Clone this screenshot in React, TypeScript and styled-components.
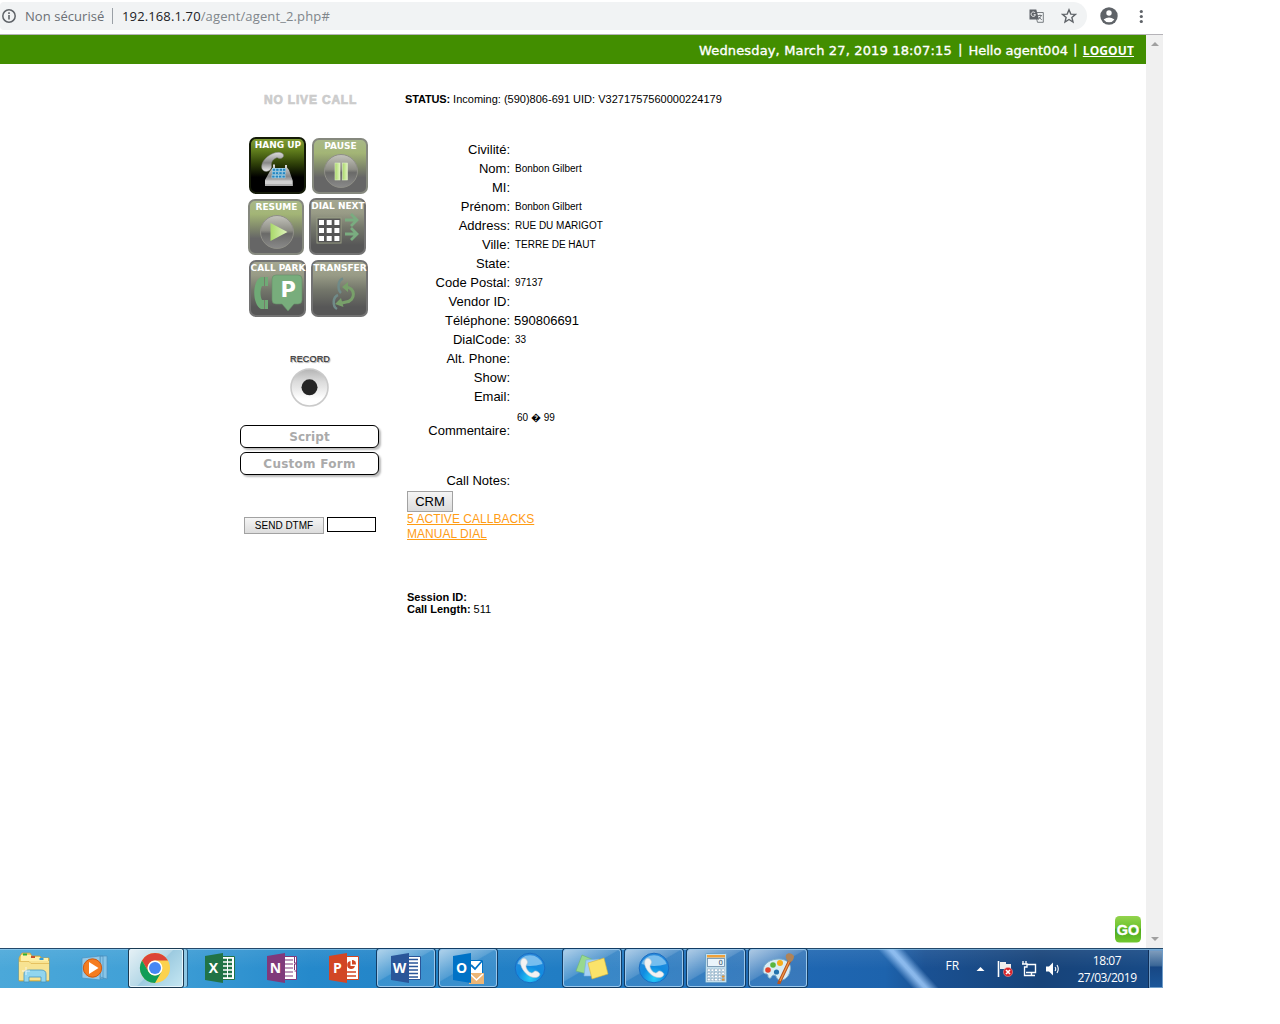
import React from 'react';
import styled, { createGlobalStyle, css } from 'styled-components';

const GlobalStyle = createGlobalStyle`
  * { box-sizing: border-box; }
  body { margin: 0; background: #fff; font-family: 'Liberation Sans', Arial, sans-serif; color: #000; }
  button { font-family: inherit; }
`;

const Desktop = styled.div`
  width: 1163px;
  height: 988px;
  display: flex;
  flex-direction: column;
  overflow: hidden;
`;

/* ---------- browser toolbar ---------- */

const Toolbar = styled.header`
  height: 35px;
  flex: none;
  display: flex;
  align-items: center;
  padding: 0 15px 3px 0;
  border-bottom: 1px solid #b5b3b8;
  font-family: 'Open Sans', 'Noto Sans', sans-serif;
  font-size: 13px;
`;

const AddressBar = styled.div`
  width: 1087px;
  height: 28px;
  margin-top: 1px;
  padding: 0 10px 0 2px;
  display: flex;
  align-items: center;
  background: #f1f3f4;
  border-radius: 4px 14px 14px 4px;
  color: #80868b;
`;

const Security = styled.span`
  margin-left: 9px;
  width: 88px;
  line-height: 16px;
  border-right: 1px solid #9aa0a6;
  color: #6b6f74;
  white-space: nowrap;
  letter-spacing: 0.05px;
`;

const Url = styled.span`
  margin-left: 9px;
  flex: 1;
  white-space: nowrap;
  letter-spacing: 0.13px;
  b { font-weight: 400; color: #202124; }
`;

const ToolIcon = styled.svg<{ $gap?: number }>`
  flex: none;
  margin-left: ${(p) => p.$gap ?? 0}px;
`;

/* ---------- page ---------- */

const Viewport = styled.div`
  flex: 1;
  min-height: 0;
  display: flex;
`;

const Page = styled.main`
  width: 1146px;
  display: flex;
  flex-direction: column;
`;

const Scrollbar = styled.div`
  width: 17px;
  background: #f0f0f0;
  display: flex;
  flex-direction: column;
  justify-content: space-between;
  align-items: center;
  padding: 7px 0 7px;
`;

const Arrow = styled.i<{ $down?: boolean }>`
  border: 4px solid transparent;
  border-top-width: ${(p) => (p.$down ? 4 : 0)}px;
  border-bottom-width: ${(p) => (p.$down ? 0 : 4)}px;
  border-${(p) => (p.$down ? 'top' : 'bottom')}-color: #a0a0a0;
`;

const TopBar = styled.div`
  height: 29px;
  flex: none;
  display: flex;
  justify-content: flex-end;
  align-items: center;
  padding: 1px 12px 0 0;
  background: #428e00;
  color: #fff;
  font: 13px 'DejaVu Sans', Verdana, sans-serif;
  -webkit-text-stroke: 0.35px #fff;
  white-space: pre;
`;

const Clock = styled.span`
  letter-spacing: 0.15px;
`;

const Separator = styled.span<{ $pad: number }>`
  font-size: 12px;
  padding: 0 ${(p) => p.$pad}px;
`;

const Logout = styled.a`
  font: 700 12px 'Open Sans', sans-serif;
  letter-spacing: 0.1px;
  -webkit-text-stroke: 0;
  text-decoration: underline;
`;

const Workspace = styled.div`
  flex: 1;
  display: flex;
`;

const Controls = styled.section`
  width: 405px;
  padding-left: 240px;
  display: flex;
  flex-direction: column;
`;

const CallState = styled.div`
  margin: 29px 0 0 24px;
  height: 14px;
  line-height: 14px;
  font-size: 12px;
  font-weight: 700;
  color: #ccc;
  letter-spacing: 0.82px;
  -webkit-text-stroke: 0.7px #ccc;
  white-space: nowrap;
`;

const TileRow = styled.div<{ $top: number; $left: number; $gap: number }>`
  display: flex;
  align-items: flex-end;
  margin: ${(p) => p.$top}px 0 0 ${(p) => p.$left}px;
  gap: ${(p) => p.$gap}px;
`;

type Tone = 'active' | 'olive' | 'muted';
const tones: Record<Tone, ReturnType<typeof css>> = {
  active: css`
    background: linear-gradient(#7f9b33 0, #5f7c1c 22%, #2c3d08 48%, #000 72%);
    border-color: #141a08;
  `,
  olive: css`
    background: linear-gradient(#a8b888 0, #a3b576 25%, #828b6c 50%, #666 72%);
    border-color: #85887e;
  `,
  muted: css`
    background: linear-gradient(#a4a791 0, #989b86 25%, #74776b 52%, #575757 85%);
    border-color: #727272;
  `,
};

const TileButton = styled.button<{ $tone: Tone; $size: number }>`
  width: ${(p) => p.$size}px;
  height: ${(p) => p.$size}px;
  padding: 0;
  border: 2px solid;
  border-radius: 7px;
  display: flex;
  flex-direction: column;
  align-items: center;
  ${(p) => tones[p.$tone]}
`;

const TileLabel = styled.span`
  height: 12px;
  font: 700 9px/13px 'DejaVu Sans', Verdana, sans-serif;
  color: #fff;
  white-space: nowrap;
  margin-right: -1px;
`;

const Recorder = styled.div`
  margin: 36px 0 0 47px;
  width: 46px;
  display: flex;
  flex-direction: column;
  align-items: center;
  font-size: 9px;
  line-height: 13px;
  letter-spacing: 0.15px;
  color: #333;
  -webkit-text-stroke: 0.2px #333;
  text-shadow: 1px 1px 1px #999;
  svg { margin-top: 1px; }
`;

const MenuButton = styled.button<{ $top: number; $spacing: number }>`
  margin: ${(p) => p.$top}px 0 0;
  width: 139px;
  height: 23px;
  padding: 0;
  border: 1px solid #000;
  border-radius: 6px;
  background: #fff;
  box-shadow: 2px 2px 2px #bbb;
  color: #aaa;
  font: 700 12px/20px 'DejaVu Sans', Verdana, sans-serif;
  letter-spacing: ${(p) => p.$spacing}px;
`;

const Dtmf = styled.div`
  display: flex;
  margin: 42px 0 0 4px;
  gap: 3px;
`;

const NativeButton = styled.button<{ $w: number; $h: number; $size: number }>`
  width: ${(p) => p.$w}px;
  height: ${(p) => p.$h}px;
  padding: 0;
  border: 1px solid #a2a2a2;
  background: linear-gradient(#f5f5f5, #dcdcdc);
  font-size: ${(p) => p.$size}px;
  color: #000;
`;

const DtmfInput = styled.input`
  width: 49px;
  height: 15px;
  border: 1px solid #000;
  padding: 0;
`;

const Details = styled.section`
  flex: 1;
  display: flex;
  flex-direction: column;
  align-items: flex-start;
`;

const Status = styled.div`
  margin-top: 29px;
  height: 14px;
  font-size: 11px;
  line-height: 13px;
  white-space: pre;
  letter-spacing: 0.005px;
  b { letter-spacing: -0.14px; }
`;

const Fields = styled.dl`
  margin: 33px 0 0;
`;

const Field = styled.div<{ $h?: number; $push?: number }>`
  height: ${(p) => p.$h ?? 19}px;
  padding-top: ${(p) => p.$push ?? 0}px;
  display: flex;
  align-items: center;
`;

const Label = styled.dt`
  width: 105px;
  text-align: right;
  font-size: 13px;
  line-height: 19px;
`;

const Value = styled.dd<{ $large?: boolean }>`
  margin: 0 0 0 ${(p) => (p.$large ? 4 : 5)}px;
  font-size: ${(p) => (p.$large ? 13 : 10)}px;
  line-height: 19px;
`;

const Comment = styled.dd`
  margin: 0 0 25px 7px;
  font-size: 10px;
  line-height: 12px;
`;

const Links = styled.nav`
  margin-left: 2px;
  display: flex;
  flex-direction: column;
  align-items: flex-start;
  font-size: 12px;
  line-height: 15px;
`;

const OrangeLink = styled.a`
  color: #ff9c14;
  text-decoration: underline;
  letter-spacing: 0.03px;
`;

const Session = styled.div`
  margin: 49px 0 0 2px;
  font-size: 11px;
  line-height: 12px;
`;

const PageFooter = styled.div`
  display: flex;
  justify-content: flex-end;
  padding: 0 4px 5px 0;
`;

/* ---------- taskbar ---------- */

const Taskbar = styled.footer`
  height: 40px;
  flex: none;
  display: flex;
  padding-left: 3px;
  color: #fff;
  border-top: 1px solid #24496b;
  box-shadow: inset 0 1px 0 rgba(150, 205, 240, 0.7);
  background:
    linear-gradient(48deg, transparent 37%, rgba(165, 208, 255, 0.8) 48%, rgba(165, 208, 255, 0.8) 51%, transparent 62%) 873px 0 / 72px 40px no-repeat,
    linear-gradient(rgba(255, 255, 255, 0.08), transparent 50%),
    linear-gradient(90deg, #4ba8d9 0, #3f9fd6 160px, #2589cb 310px, #217dc4 560px, #1f67b2 800px, #1d63ad 885px, #1a5193 925px, #174379 1040px, #174a86 1150px);
`;

type SlotState = 'idle' | 'open' | 'current';

const Slot = styled.button<{ $state: SlotState }>`
  width: 58px;
  height: 38px;
  margin: 0 2px;
  padding: 0;
  display: flex;
  align-items: center;
  justify-content: center;
  border: 1px solid transparent;
  background: none;
  ${(p) =>
    p.$state === 'open' &&
    css`
      border-color: #9bc8ec;
      border-radius: 3px;
      box-shadow: 0 0 0 1px #123c64;
      background: linear-gradient(150deg, rgba(255, 255, 255, 0.6), rgba(255, 255, 255, 0.22) 45%, rgba(255, 255, 255, 0.1) 47%, rgba(255, 255, 255, 0.12));
    `}
  ${(p) =>
    p.$state === 'current' &&
    css`
      width: 54px;
      margin-right: 6px;
      padding-right: 2px;
      border-color: #e6f5fc;
      border-radius: 2px;
      box-shadow: 0 0 0 1px #1b3a52, 4px 0 0 0 #90c8e4, 5px 0 0 0 #235c85;
      background: linear-gradient(135deg, #e4f0f5, #b5d8e7 48%, #9dcbe0 50%, #c4e6f2);
    `}
`;

const Tray = styled.div`
  margin-left: auto;
  display: flex;
  align-items: center;
  font-family: 'Open Sans', 'Noto Sans', sans-serif;
  font-size: 12px;
`;

const Lang = styled.span`
  margin: 0 17px 6px 0;
  font-size: 12px;
  letter-spacing: -0.1px;
`;

const DateTime = styled.div`
  width: 84px;
  margin-left: 5px;
  text-align: center;
  line-height: 17px;
  letter-spacing: -0.45px;
`;

const ShowDesktop = styled.div`
  width: 14px;
  height: 38px;
  border: 1px solid #6f9cc8;
  background: linear-gradient(#7d9bbb, #3b6797 40%, #174784 45%, #1b5699);
  box-shadow: -1px 0 0 #102f58;
`;

/* ---------- drawings ---------- */

const PhoneSet = () => (
  <svg width="36" height="38" viewBox="0 0 36 38">
    <defs>
      <linearGradient id="metal" x1="0" y1="0" x2="0" y2="1">
        <stop offset="0" stopColor="#ddd" /><stop offset=".55" stopColor="#888" /><stop offset="1" stopColor="#eee" />
      </linearGradient>
    </defs>
    <path d="M4 20C0 18 1 11 7 6C13 1 20 0 23 3C24.500 5 23 7.500 20 7.500C18 7.500 18 6 16 7C12 9 11 12 11.500 15C12 18.500 8 21.500 4 20Z" fill="url(#metal)" stroke="#777" strokeWidth=".5" />
    <path d="M10 20L13 16.500V13.500H15V17H25V14H27V16.500L29 19L32.500 29V35H5V29Z" fill="url(#metal)" />
    <path d="M5 29.500H32.500V35H5Z" fill="#cfcfcf" />
    <path d="M5 34H32.500" stroke="#8d8d8d" />
    <g fill="#2485c0" stroke="#a8ddf5" strokeWidth=".5">
      {[0, 1, 2].map((r) => [0, 1, 2, 3].map((c) => <rect key={`${r}${c}`} x={12.5 + c * 3.4 - r * 0.3} y={17.5 + r * 3.4} width="3" height="2.600" />))}
    </g>
  </svg>
);

const Ball = ({ children }: { children: React.ReactNode }) => (
  <svg width="38" height="38" viewBox="-1 0 38 38">
    <defs>
      <linearGradient id="ball" x1="0" y1="0" x2="0" y2="1">
        <stop offset="0" stopColor="#c4c4bc" /><stop offset=".45" stopColor="#8e8e86" /><stop offset=".55" stopColor="#6a6a68" /><stop offset="1" stopColor="#8a8a8a" />
      </linearGradient>
      <linearGradient id="lime" x1="0" y1="0" x2="1" y2="0">
        <stop offset="0" stopColor="#a9d86a" /><stop offset="1" stopColor="#e0f4bd" />
      </linearGradient>
    </defs>
    <circle cx="19" cy="19" r="16.500" fill="url(#ball)" stroke="#8f8f87" strokeWidth="1" />
    {children}
  </svg>
);

const PauseBall = () => (
  <Ball>
    <rect x="13" y="11" width="5" height="17" fill="url(#lime)" stroke="#dff0c4" strokeWidth=".6" />
    <rect x="20.500" y="11" width="5" height="17" fill="url(#lime)" stroke="#dff0c4" strokeWidth=".6" />
  </Ball>
);

const PlayBall = () => (
  <Ball><path d="M12.500 10L29.500 19L12.500 28Z" fill="url(#lime)" /></Ball>
);

const DialPad = () => (
  <svg width="53" height="40" viewBox="0 0 53 40">
    <rect x="6" y="6" width="24" height="25" fill="#555" stroke="#989d84" />
    {[0, 1, 2].map((r) => [0, 1, 2].map((c) => <rect key={`${r}${c}`} x={8 + c * 7.7} y={8 + r * 8} width="5" height="5" fill="#fff" />))}
    <g fill="none" stroke="#7aac80" strokeWidth="2.800">
      <path d="M34 8H46M40 2L46 8L40 14" />
      <path d="M34 22H46M40 16L46 22L40 28" />
    </g>
  </svg>
);

const ParkSign = () => (
  <svg width="53" height="40" viewBox="0 0 53 40">
    <path d="M17 3H10C1 7 1 30 10 35H17V26H11C9 22 9 16 11 12H17Z" fill="#6faa76" />
    <path d="M13.500 3V12M13.500 26V35" stroke="#777b6b" />
    <path d="M25 1H47Q51 1 51 5V26Q51 30 47 30H43L37 37L31 30H25Q21 30 21 26V5Q21 1 25 1Z" fill="#78ad7c" stroke="#648d68" strokeWidth=".6" />
    <text x="29.500" y="23" fill="#fff" fontSize="21" fontWeight="700" fontFamily="DejaVu Sans, sans-serif">P</text>
  </svg>
);

const TransferArrows = () => (
  <svg width="53" height="40" viewBox="0 0 53 40" fill="none">
    <path d="M30 4.500C25 6 24 15 28 19M25 21C20 23 19 32 24 35" stroke="#708b89" strokeWidth="2.500" />
    <path d="M32 13C43 13 43 27 33 28C30 29 29 29 27 29" stroke="#78a06a" strokeWidth="3" />
    <path d="M29 13L35 8V18ZM22 30L28 24L30.500 33Z" fill="#78a06a" />
  </svg>
);

const RecordDisc = () => (
  <svg width="40" height="40" viewBox="0 0 40 40">
    <defs>
      <linearGradient id="disc" x1="0" y1="0" x2="0" y2="1">
        <stop offset="0" stopColor="#b4b4b4" /><stop offset=".35" stopColor="#dcdcdc" /><stop offset=".5" stopColor="#e6e6e6" /><stop offset=".8" stopColor="#fff" />
      </linearGradient>
    </defs>
    <circle cx="19.500" cy="20.500" r="18.500" fill="url(#disc)" stroke="#cacaca" strokeWidth="1.600" />
    <circle cx="19.500" cy="20.300" r="8" fill="#252525" />
  </svg>
);

const GoBadge = () => (
  <svg width="28" height="28" viewBox="0 0 28 28">
    <defs>
      <linearGradient id="go" x1="0" y1="0" x2="0" y2="1">
        <stop offset="0" stopColor="#93d34d" /><stop offset=".45" stopColor="#6cc32d" /><stop offset=".5" stopColor="#4ba51c" /><stop offset="1" stopColor="#72c92f" />
      </linearGradient>
    </defs>
    <rect x="1" y="1" width="26" height="26.500" rx="4.500" fill="url(#go)" />
    <text x="2.700" y="19.500" fill="#fff" stroke="#fff" strokeWidth=".4" fontSize="14" fontWeight="700" textLength="22.500" lengthAdjust="spacingAndGlyphs" fontFamily="Liberation Sans, sans-serif">GO</text>
  </svg>
);

const Explorer = () => (
  <svg width="36" height="32" viewBox="0 0 36 32">
    <path d="M4 4L6 1H14L16 4H24L25 6H33V29H3V6Z" fill="#edcf68" stroke="#c99f38" strokeWidth=".7" />
    <path d="M5 3H15V9H5Z" fill="#fff0a8" /><path d="M7 1.500h4v2H7Z" fill="#2eb135" />
    <path d="M14 5H24V10H14Z" fill="#fff0a8" /><path d="M15 4h4v2H15Z" fill="#c8502c" />
    <path d="M22 6H32V11H22Z" fill="#fff0a8" /><path d="M23.500 6h4v2H23.500Z" fill="#2f9cda" />
    <path d="M3 9H33V28H3Z" fill="#f7e392" />
    <path d="M3 9.500H13L15 11.500H33" fill="none" stroke="#dfb953" strokeWidth=".8" />
    <path d="M8 30V22Q8 18 13 18H25Q30 18 30 22V30H25V25H13V30Z" fill="#91d5ee" stroke="#4596bf" strokeWidth=".8" />
    <path d="M10 15V23M6 19H14" stroke="#fff" strokeWidth="1" opacity=".7" />
  </svg>
);

const MediaPlayer = () => (
  <svg width="32" height="28" viewBox="0 0 32 28">
    <path d="M20 2H27V25L20 23ZM17 2H23V25L17 24Z" fill="#87c5e8" stroke="#4a91bd" strokeWidth=".7" />
    <path d="M2 4L20 2V26L2 24Z" fill="#94c9e8" stroke="#4e96c4" strokeWidth=".8" />
    <circle cx="12.500" cy="14" r="9.200" fill="#f57c1f" stroke="#cd5912" />
    <path d="M9 8L18.500 14L9 20Z" fill="#fff" />
  </svg>
);

const Chrome = () => (
  <svg width="32" height="32" viewBox="0 0 48 48">
    <circle cx="24" cy="24" r="22.500" fill="#fcd24d" />
    <path d="M4.500 12.750A22.500 22.500 0 0 1 43.500 12.750H24A11.250 11.250 0 0 0 14.260 29.600Z" fill="#dc4437" />
    <path d="M4.500 12.750A22.500 22.500 0 0 0 24 46.500L33.740 29.600A11.250 11.250 0 0 1 14.260 29.600Z" fill="#109d58" />
    <circle cx="24" cy="24" r="11.200" fill="#fff" /><circle cx="24" cy="24" r="9" fill="#4587f4" />
  </svg>
);

const OfficeIcon = ({ color, letter, children }: { color: string; letter: string; children: React.ReactNode }) => (
  <svg width="32" height="32" viewBox="0 0 32 32">
    {children}
    <path d="M1 4L19 1V31L1 28Z" fill={color} />
    <text x="9.500" y="21" textAnchor="middle" fill="#fff" fontSize="14" fontWeight="700" fontFamily="Open Sans, sans-serif">{letter}</text>
  </svg>
);

const Sheet = ({ color }: { color: string }) => <path d="M17 4.500H30.500V27.500H17Z" fill="#fff" stroke={color} />;

const Excel = () => (
  <OfficeIcon color="#217346" letter="X">
    <Sheet color="#217346" />
    <path d="M18 8H28M18 12H28M18 16H28M18 20H28M18 24H28" stroke="#217346" strokeWidth="2.400" />
    <path d="M23.500 6V26" stroke="#fff" />
  </OfficeIcon>
);
const OneNote = () => (
  <OfficeIcon color="#80397b" letter="N">
    <Sheet color="#80397b" />
    <path d="M19 8H27M19 12H27M19 16H27M19 20H27M19 24H27" stroke="#80397b" strokeWidth="1.200" />
    <path d="M28.500 5V11H30.500M30.500 12H28.500V18M28.500 19H30.500" fill="none" stroke="#80397b" />
  </OfficeIcon>
);
const PowerPoint = () => (
  <OfficeIcon color="#d24625" letter="P">
    <Sheet color="#d24625" />
    <path d="M22.500 9A4 4 0 1 0 27 14H22.500Z" fill="#d24625" /><path d="M24 8V12.500H28A4 4 0 0 0 24 8Z" fill="#d24625" />
    <path d="M19 20H28M19 24H28" stroke="#d24625" strokeWidth="1.600" />
  </OfficeIcon>
);
const Word = () => (
  <OfficeIcon color="#2a5699" letter="W">
    <Sheet color="#2a5699" />
    <path d="M19 7.500H28M19 11H28M19 14.500H28M19 18H28M19 21.500H28M19 25H28" stroke="#2a5699" strokeWidth="1.500" />
  </OfficeIcon>
);
const Outlook = () => (
  <OfficeIcon color="#0072c6" letter="O">
    <path d="M17 8.500H30.500V24H17Z" fill="#fff" stroke="#0072c6" />
    <path d="M19 13L23 17L30 9" fill="none" stroke="#0072c6" strokeWidth="1.800" />
    <path d="M17 21H32V32H17Z" fill="#ecb575" /><path d="M18 22L24.500 28L31 22" fill="none" stroke="#fff" strokeWidth="1.600" />
  </OfficeIcon>
);

const Softphone = () => (
  <svg width="32" height="32" viewBox="0 0 32 32">
    <defs>
      <radialGradient id="soft" cx=".5" cy=".85" r=".8">
        <stop offset="0" stopColor="#25cdf9" /><stop offset=".5" stopColor="#118be0" /><stop offset="1" stopColor="#2a8bdb" />
      </radialGradient>
    </defs>
    <circle cx="16" cy="16" r="14.800" fill="url(#soft)" stroke="#1a6dc2" />
    <path d="M3.500 12A13 12 0 0 1 28.500 12Q16 16 3.500 12Z" fill="#b4e1fa" opacity=".6" />
    <path d="M8 7C10 5 13 7 13.500 10C13.500 12 11.500 13 12 15C13 18 15 20.500 17.500 21C19.500 21 20 18.500 22 19C25 20 27 22 25 24C22 27 16 25.500 12 21.500C7 16.500 5 10 8 7Z" fill="#f2f2f2" stroke="#b9c7d2" strokeWidth=".6" />
  </svg>
);

const StickyNotes = () => (
  <svg width="36" height="32" viewBox="0 0 36 32">
    <path d="M8 3L22 9L17 23L2 19Z" fill="#98d98f" stroke="#6fb56d" strokeWidth=".6" />
    <path d="M12 8L25 7L26 24L10 24Z" fill="#a6d1f5" stroke="#75aee0" strokeWidth=".6" />
    <path d="M14 11L30 6L34 22L18 27Z" fill="#fbe36a" stroke="#d2b13a" strokeWidth=".6" />
  </svg>
);

const Calculator = () => (
  <svg width="28" height="32" viewBox="0 0 28 32">
    <rect x="3.500" y="1.500" width="21" height="29" rx="1" fill="#c5dfed" stroke="#6ba2c8" />
    <rect x="5" y="3" width="18" height="2.500" fill="#f0a13a" />
    <rect x="5.500" y="6.500" width="17" height="8" fill="#eaf4fb" stroke="#6a8ca8" strokeWidth=".8" />
    <text x="16.500" y="13.300" fontSize="7" fill="#35506a" fontFamily="DejaVu Sans, sans-serif">0</text>
    {[0, 1, 2, 3].map((r) => [0, 1, 2, 3, 4].map((c) => <rect key={`${r}${c}`} x={5.5 + c * 3.6} y={17 + r * 3.2} width="2.600" height="2.200" fill={c === 4 && r > 1 ? '#f09526' : '#fff'} stroke="#7d9bb4" strokeWidth=".4" />))}
  </svg>
);

const Paint = () => (
  <svg width="34" height="32" viewBox="0 0 34 32">
    <path d="M2 19C2 11 10 7 18 7C26 7 31 12 29 19C28 25 23 29 18 28C15 27 16 23 13 23C10 23 11 27 8 26C6 25 8 23 6 22C4 22 2 21 2 19Z" fill="#d8edf5" stroke="#7eaecb" />
    <circle cx="7" cy="18" r="2.800" fill="#e2452d" /><circle cx="12" cy="13" r="2.800" fill="#59b53d" /><circle cx="19" cy="11" r="3" fill="#f6ad1d" /><circle cx="15.500" cy="20" r="2.600" fill="#2473ad" />
    <path d="M29 8L18 31" stroke="#b7531c" strokeWidth="3.200" strokeLinecap="round" /><path d="M28.500 9L19 29" stroke="#f09a4b" strokeWidth="1.200" />
    <path d="M25 3C27 0 31 1 33 4C33 7 31 10 29 10C26 9 24 6 25 3Z" fill="#b08358" />
  </svg>
);

const TrayIcons = () => (
  <svg width="84" height="20" viewBox="0 0 84 20">
    <path d="M0.500 12L4.500 8L8.500 12Z" fill="#fff" />
    <path d="M22.500 2V18" stroke="#fff" strokeWidth="1.600" />
    <path d="M24 3H30V5H35V11H29V10H24Z" fill="#eee" />
    <circle cx="32" cy="13" r="4.600" fill="#d9252b" stroke="#f4a7a7" strokeWidth=".5" /><path d="M30 11L34 15M34 11L30 15" stroke="#fff" strokeWidth="1.600" />
    <path d="M51 5.500H59.500V13.500H50M52 16.500H59M55.500 14V16" fill="none" stroke="#fff" strokeWidth="1.400" />
    <path d="M47 2V5M50 2V5M46 5H51V8H48.500V16.500H52" fill="none" stroke="#fff" strokeWidth="1.300" />
    <path d="M70 7.500H73L77 3.500V16.500L73 12.500H70Z" fill="#fff" />
    <path d="M79 8Q80.500 10 79 12M81 6Q83.500 10 81 14" fill="none" stroke="#fff" strokeWidth="1.100" />
  </svg>
);

/* ---------- data ---------- */

interface TileSpec { label: string; tone: Tone; size: number; icon: React.ReactNode }

const Tile = ({ label, tone, size, icon }: TileSpec) => (
  <TileButton $tone={tone} $size={size}>
    <TileLabel>{label}</TileLabel>
    {icon}
  </TileButton>
);

const fields: { label: string; value?: string; large?: boolean }[] = [
  { label: 'Civilité:' },
  { label: 'Nom:', value: 'Bonbon Gilbert' },
  { label: 'MI:' },
  { label: 'Prénom:', value: 'Bonbon Gilbert' },
  { label: 'Address:', value: 'RUE DU MARIGOT' },
  { label: 'Ville:', value: 'TERRE DE HAUT' },
  { label: 'State:' },
  { label: 'Code Postal:', value: '97137' },
  { label: 'Vendor ID:' },
  { label: 'Téléphone:', value: '590806691', large: true },
  { label: 'DialCode:', value: '33' },
  { label: 'Alt. Phone:' },
  { label: 'Show:' },
  { label: 'Email:' },
];

const slots: { icon: React.ReactNode; state: SlotState }[] = [
  { icon: <Explorer />, state: 'idle' },
  { icon: <MediaPlayer />, state: 'idle' },
  { icon: <Chrome />, state: 'current' },
  { icon: <Excel />, state: 'idle' },
  { icon: <OneNote />, state: 'idle' },
  { icon: <PowerPoint />, state: 'idle' },
  { icon: <Word />, state: 'open' },
  { icon: <Outlook />, state: 'open' },
  { icon: <Softphone />, state: 'idle' },
  { icon: <StickyNotes />, state: 'open' },
  { icon: <Softphone />, state: 'open' },
  { icon: <Calculator />, state: 'open' },
  { icon: <Paint />, state: 'open' },
];

export default function App() {
  return (
    <Desktop>
      <GlobalStyle />
      <Toolbar>
        <AddressBar>
          <ToolIcon width="14" height="14" viewBox="0 0 14 14">
            <circle cx="7" cy="7" r="6.200" fill="none" stroke="#5f6368" strokeWidth="1.500" />
            <path d="M7 6V10.500M7 3.300V4.900" stroke="#5f6368" strokeWidth="1.600" />
          </ToolIcon>
          <Security>Non sécurisé</Security>
          <Url><b>192.168.1.70</b>/agent/agent_2.php#</Url>
          <ToolIcon width="15" height="14" viewBox="0 0 15 14">
            <path d="M6 3.500H14.300V13.300H8.500L6 3.500Z" fill="#f1f3f4" stroke="#6b6f74" strokeWidth=".9" />
            <path d="M0.500 0.500H7.300L10 10.500H0.500Z" fill="#5f6368" />
            <path d="M6.200 4A2.200 2.200 0 1 0 6.500 5.700H4.700" fill="none" stroke="#fff" strokeWidth=".9" />
            <path d="M9 6.500H13M11 5.500V6.500M12.300 6.500Q11.500 9 9.500 10M10 8L12.800 11" fill="none" stroke="#6b6f74" strokeWidth=".9" />
          </ToolIcon>
          <ToolIcon $gap={17} width="16" height="16" viewBox="0 0 16 16">
            <path d="M8 1.800L9.800 6.100L14.400 6.400L10.900 9.400L12 14L8 11.500L4 14L5.100 9.400L1.600 6.400L6.200 6.100Z" fill="none" stroke="#5f6368" strokeWidth="1.400" />
          </ToolIcon>
        </AddressBar>
        <ToolIcon $gap={13} width="18" height="18" viewBox="0 0 18 18">
          <circle cx="9" cy="9" r="8.700" fill="#5f6368" />
          <circle cx="9" cy="6" r="2.700" fill="#fff" /><path d="M3.600 12.500Q9 8.500 14.400 12.500Q12.500 15.300 9 15.300Q5.500 15.300 3.600 12.500Z" fill="#fff" />
        </ToolIcon>
        <ToolIcon $gap={21} width="4" height="16" viewBox="0 0 4 16" fill="#5f6368">
          <circle cx="2.300" cy="3.500" r="1.600" /><circle cx="2.300" cy="8.500" r="1.600" /><circle cx="2.300" cy="13.500" r="1.600" />
        </ToolIcon>
      </Toolbar>

      <Viewport>
        <Page>
          <TopBar>
            <Clock>Wednesday, March 27, 2019 18:07:15</Clock>
            <Separator $pad={2.5}> | </Separator>
            <span>Hello agent004</span>
            <Separator $pad={1.6}> | </Separator>
            <Logout>LOGOUT</Logout>
          </TopBar>
          <Workspace>
            <Controls>
              <CallState>NO LIVE CALL</CallState>
              <TileRow $top={30} $left={9} $gap={6}>
                <Tile label="HANG UP" tone="active" size={57} icon={<PhoneSet />} />
                <Tile label="PAUSE" tone="olive" size={56} icon={<PauseBall />} />
              </TileRow>
              <TileRow $top={4} $left={8} $gap={5}>
                <Tile label="RESUME" tone="olive" size={56} icon={<PlayBall />} />
                <Tile label="DIAL NEXT" tone="muted" size={57} icon={<DialPad />} />
              </TileRow>
              <TileRow $top={5} $left={9} $gap={5}>
                <Tile label="CALL PARK" tone="muted" size={57} icon={<ParkSign />} />
                <Tile label="TRANSFER" tone="muted" size={57} icon={<TransferArrows />} />
              </TileRow>
              <Recorder>RECORD<RecordDisc /></Recorder>
              <MenuButton $top={18} $spacing={0.1}>Script</MenuButton>
              <MenuButton $top={4} $spacing={0.25}>Custom Form</MenuButton>
              <Dtmf>
                <NativeButton $w={80} $h={17} $size={10}>SEND DTMF</NativeButton>
                <DtmfInput />
              </Dtmf>
            </Controls>
            <Details>
              <Status><b>STATUS:</b> Incoming: (590)806-691 UID: V3271757560000224179</Status>
              <Fields>
                {fields.map((f) => (
                  <Field key={f.label}>
                    <Label>{f.label}</Label>
                    {f.value && <Value $large={f.large}>{f.value}</Value>}
                  </Field>
                ))}
                <Field $h={49}>
                  <Label>Commentaire:</Label>
                  <Comment>60 � 99</Comment>
                </Field>
                <Field $h={36} $push={14}>
                  <Label>Call Notes:</Label>
                </Field>
              </Fields>
              <Links>
                <NativeButton $w={46} $h={21} $size={13}>CRM</NativeButton>
                <OrangeLink>5 ACTIVE CALLBACKS</OrangeLink>
                <OrangeLink>MANUAL DIAL</OrangeLink>
              </Links>
              <Session>
                <b>Session ID:</b><br />
                <b>Call Length:</b> 511
              </Session>
            </Details>
          </Workspace>
          <PageFooter><GoBadge /></PageFooter>
        </Page>
        <Scrollbar><Arrow /><Arrow $down /></Scrollbar>
      </Viewport>

      <Taskbar>
        {slots.map((s, i) => <Slot key={i} $state={s.state}>{s.icon}</Slot>)}
        <Tray>
          <Lang>FR</Lang>
          <TrayIcons />
          <DateTime>18:07<br />27/03/2019</DateTime>
          <ShowDesktop />
        </Tray>
      </Taskbar>
    </Desktop>
  );
}
